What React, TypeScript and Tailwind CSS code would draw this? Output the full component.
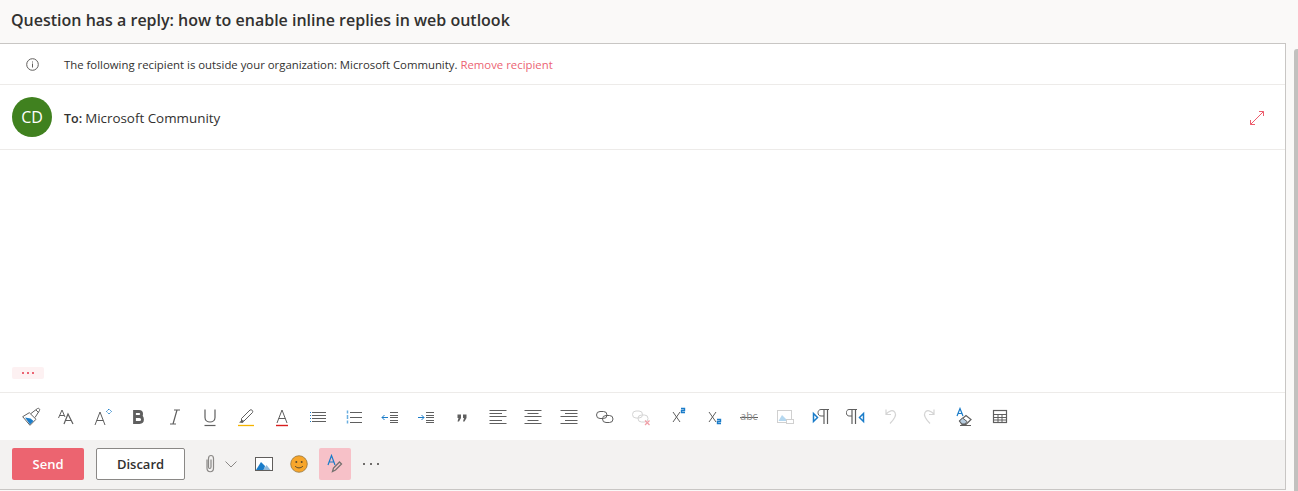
import React from "react";

const G = "#5f5f5f";
const B = "#1a7cc9";
const Ic = ({ children, w = 20, h = 20 }: { children: React.ReactNode; w?: number; h?: number }) => (
  <svg width={w} height={h} viewBox={`0 0 ${w} ${h}`} fill="none" strokeWidth="1">{children}</svg>
);
const L = ({ x1, x2, y, c = G }: { x1: number; x2: number; y: number; c?: string }) => <path d={`M${x1} ${y + 0.5}H${x2}`} stroke={c} />;

const icons: React.ReactNode[] = [
  <Ic key="0">
    <path d="M1.700 9.700 8.300 5.700 15 12.300 9 18.300z" fill="#fff" stroke={G} />
    <path d="M4 10.500 9.500 11.500 12.500 14 9 17.500z" fill={B} />
    <path d="M10 6.500 16.500 1.500c1.200-.8 2.800.8 2 2L14 10.500" stroke={G} />
    <path d="M15 3 17.500 5.500" stroke={G} />
  </Ic>,
  <Ic key="1">
    <path d="M1.500 11 5 3l3 7M2.500 8.500H7" stroke={G} />
    <path d="M7 17 11 7l5 10M8.500 13.500h6" stroke={G} strokeWidth="1.200" />
  </Ic>,
  <Ic key="2">
    <path d="M2 18 7 5l5 13M3.700 13.500h6.600" stroke={G} />
    <path d="M13.500 4.500l2.500-2.500 2.500 2.500-2.500 2.500z" stroke={B} strokeDasharray="1.500 .7" />
  </Ic>,
  <Ic key="3">
    <path d="M5.500 4.500h4.500c3.500 0 3.500 5 0 5H5.500zM5.500 9.500h5c4 0 4 6 0 6h-5z" stroke={G} strokeWidth="2.800" />
  </Ic>,
  <Ic key="4">
    <path d="M8 17 12 3M5 17h6M9 3h6" stroke={G} strokeWidth="1.200" />
  </Ic>,
  <Ic key="5">
    <path d="M5 2.500v8c0 6 10 6 10 0v-8" stroke={G} strokeWidth="1.200" />
    <path d="M4.500 18.500h11" stroke={G} strokeWidth="1.200" />
  </Ic>,
  <Ic key="6">
    <path d="M5.500 11.500 14 3c1.500-1 3.500 1 2.500 2.500L8 14H5.500z" stroke={G} />
    <path d="M3 15.500 6 13l2 1.500-1.500 1.500z" fill={G} />
    <path d="M2 18.500h16" stroke="#f5b400" strokeWidth="1.300" />
  </Ic>,
  <Ic key="7">
    <path d="M5 16 10 3l5 13M6.500 11.500h7" stroke={G} />
    <path d="M4 18.500h12" stroke="#d81e1e" strokeWidth="1.400" />
  </Ic>,
  <Ic key="8">
    <path d="M2 5.500h1M2 8.500h1M2 11.500h1M2 14.500h1" stroke={B} />
    <L x1={4} x2={18} y={5} /><L x1={4} x2={18} y={8} /><L x1={4} x2={18} y={11} /><L x1={4} x2={18} y={14} />
  </Ic>,
  <Ic key="9">
    <path d="M3.500 3.500v3M3.500 8v4M3.500 13.500v3" stroke="#6aaee0" strokeWidth="1.500" />
    <L x1={6} x2={18} y={5} /><L x1={6} x2={18} y={10} /><L x1={6} x2={18} y={15} />
  </Ic>,
  <Ic key="10">
    <path d="M8 10.500H2M4.500 8l-2.500 2.500L4.500 13" stroke={B} />
    <L x1={10} x2={18} y={5} /><L x1={10} x2={18} y={8} /><L x1={10} x2={18} y={10} /><L x1={10} x2={18} y={13} /><L x1={10} x2={18} y={15} />
  </Ic>,
  <Ic key="11">
    <path d="M2 10.500h6M5.500 8 8 10.500 5.500 13" stroke={B} />
    <L x1={10} x2={18} y={5} /><L x1={10} x2={18} y={8} /><L x1={10} x2={18} y={10} /><L x1={10} x2={18} y={13} /><L x1={10} x2={18} y={15} />
  </Ic>,
  <Ic key="12">
    <path d="M5.500 7.500h3.500v3.500l-2 3.500H5.500l1-3.500h-1zM11 7.500h3.500v3.500l-2 3.500H11l1-3.500h-1z" fill={G} />
  </Ic>,
  <Ic key="13" w={18} h={20}>
    {[3, 6, 9, 13, 16].map((y, i) => <L key={y} x1={0.5} x2={i % 2 ? 13 : 17.500} y={y} />)}
  </Ic>,
  <Ic key="14" w={18} h={20}>
    {[3, 6, 9, 13, 16].map((y, i) => <L key={y} x1={i % 2 ? 3.500 : 0.500} x2={i % 2 ? 14.500 : 17.500} y={y} />)}
  </Ic>,
  <Ic key="15" w={18} h={20}>
    {[3, 6, 9, 13, 16].map((y, i) => <L key={y} x1={i % 2 ? 5 : 0.500} x2={17.500} y={y} />)}
  </Ic>,
  <Ic key="16">
    <rect x="1.500" y="4.500" width="10.500" height="7" rx="3.500" stroke={G} />
    <rect x="7.500" y="8.500" width="10.500" height="7" rx="3.500" stroke={G} />
  </Ic>,
  <Ic key="17">
    <rect x="1.500" y="4" width="10" height="7" rx="3.500" stroke="#d4d4d4" />
    <rect x="7" y="8" width="10" height="7" rx="3.500" stroke="#d4d4d4" />
    <path d="M14 13.500 18.500 18M18.500 13.500 14 18" stroke="#f0a0a8" strokeWidth="1.300" />
  </Ic>,
  <Ic key="18">
    <path d="M6 5l7 10M13 5 6 15" stroke={G} />
    <path d="M14 1.500h3.500v2h-3v2H18" stroke={B} strokeWidth="1.400" />
  </Ic>,
  <Ic key="19">
    <path d="M6 5l7 10M13 5 6 15" stroke={G} />
    <path d="M14 12.500h3.500v2h-3v2H18" stroke={B} strokeWidth="1.400" />
  </Ic>,
  <Ic key="20">
    <path d="M1 10.500h18" stroke={G} />
    <text x="10" y="13" textAnchor="middle" fontSize="10.500" fill="#8a8a8a" fontFamily="Open Sans">abc</text>
  </Ic>,
  <Ic key="21">
    <rect x="2.500" y="3.500" width="14" height="12" stroke="#d0d0d0" />
    <path d="M3.500 14 7 8l6 6z" fill="#b5d8f0" />
    <rect x="11.500" y="12.500" width="7" height="4" fill="#fff" stroke="#d0d0d0" />
  </Ic>,
  <Ic key="22">
    <path d="M2.500 6.500 6.500 10.500l-4 4z" stroke={B} strokeWidth="1.500" />
    <path d="M18 2.500h-8c-4 0-4 6.500 0 6.500h3" stroke={G} />
    <path d="M13 2.500V17M16.500 2.500V17" stroke={G} strokeWidth="1.200" />
  </Ic>,
  <Ic key="23">
    <path d="M17.500 6.500 13.500 10.500l4 4z" stroke={B} strokeWidth="1.500" />
    <path d="M11 2.500H3c-3.500 0-3.500 6.500 0 6.500h3" stroke={G} />
    <path d="M6 2.500V17M9.500 2.500V17" stroke={G} strokeWidth="1.200" />
  </Ic>,
  <Ic key="24">
    <path d="M4 2.500v5h5M4 7c3-3 7-5 9-1.500 2 3.500-1 7-5 11" stroke="#d4d4d4" strokeWidth="1.200" />
  </Ic>,
  <Ic key="25">
    <path d="M16 2.500v5h-5M16 7c-3-3-7-5-9-1.500-2 3.500 1 7 5 11" stroke="#d4d4d4" strokeWidth="1.200" />
  </Ic>,
  <Ic key="26">
    <path d="M3 9 6 1.500 9 9M4 6.500h4" stroke={B} strokeWidth="1.200" />
    <path d="M5.500 14 12 8.500l5 4-5 5H8z" fill="#fff" stroke={G} strokeWidth="1.200" />
    <path d="M5.500 14l3-3 4.500 3.500-2 2.500H8z" fill="#b7cde0" stroke={G} />
    <path d="M6 18.500h11" stroke={G} />
  </Ic>,
  <Ic key="27">
    <rect x="3.500" y="3.500" width="13" height="12" stroke={G} strokeWidth="1.200" />
    <path d="M3.500 7.500h13M3.500 10.500h13M3.500 13h13M8 7.500V15.500M12 7.500V15.500" stroke={G} />
  </Ic>,
];

export default function App() {
  return (
    <div className="relative h-[491px] w-[1298px] overflow-hidden bg-[#faf9f8] [font-family:'Open_Sans','Noto_Sans',sans-serif]">
      <div className="flex h-[43px] items-center pb-[3px] pl-[11px] text-[16px] font-semibold text-[#323130]">
        Question has a reply: how to enable inline replies in web outlook
      </div>
      <div className="flex h-[447px] w-[1286px] flex-col border-t border-r border-b border-[#c8c6c4] bg-white">
        <div className="flex h-[41px] shrink-0 items-center border-b border-[#edebe9] pt-[1px] text-[11.370px] text-[#323130]">
          <span className="flex w-[64px] shrink-0 justify-center">
            <svg width="13" height="13" viewBox="0 0 13 13" fill="none">
              <circle cx="6.500" cy="6.500" r="5.800" stroke="#605e5c" />
              <path d="M6.500 5.500v4M6.500 3.500v1" stroke="#605e5c" />
            </svg>
          </span>
          <span>The following recipient is outside your organization: Microsoft Community.</span>
          <span className="ml-[3px] text-[#ec6473]">Remove recipient</span>
        </div>
        <div className="flex h-[65px] shrink-0 items-center border-b border-[#edebe9] pr-[20px] pl-[12px]">
          <div className="flex h-[40px] w-[40px] items-center justify-center rounded-full bg-[#40811f] text-[16px] text-white">CD</div>
          <div className="ml-[12px] flex items-baseline gap-[3px] pt-[3px] text-[13.400px] text-[#323130]">
            <span className="text-[12.500px] font-semibold">To:</span>
            <span>Microsoft Community</span>
          </div>
          <svg className="mt-[2px] ml-auto" width="16" height="16" viewBox="0 0 16 16" fill="none" stroke="#ec5c6c">
            <path d="M1.500 14.500 14.500 1.500M10 1.500h4.500V6M1.500 10v4.500H6" />
          </svg>
        </div>
        <div className="flex h-[243px] shrink-0 items-end border-b border-[#edebe9] pb-[13px] pl-[12px]">
          <div className="flex h-[12px] w-[32px] items-center justify-center gap-[3px] rounded-[2px] bg-[#fdf1f2]">
            <span className="h-[2px] w-[2px] bg-[#ec6473]" />
            <span className="h-[2px] w-[2px] bg-[#ec6473]" />
            <span className="h-[2px] w-[2px] bg-[#ec6473]" />
          </div>
        </div>
        <div className="flex h-[47px] shrink-0 items-center pt-[1px] pl-[13px]">
          {icons.map((icon, i) => (
            <span key={i} className="flex h-[36px] w-[35.900px] shrink-0 items-center justify-center">{icon}</span>
          ))}
        </div>
        <div className="flex h-[49px] shrink-0 items-center bg-[#f3f2f1] pb-[1px] pl-[12px]">
          <button className="h-[32px] w-[72px] rounded-[2px] bg-[#ec6470] pt-[1px] text-[13px] font-semibold text-white">Send</button>
          <button className="ml-[12px] h-[32px] w-[89px] rounded-[2px] border border-[#8a8886] bg-white pt-[1px] text-[13px] font-semibold text-[#323130]">Discard</button>
          <span className="ml-[17px] flex w-[16px] justify-center">
            <svg width="12" height="20" viewBox="0 0 12 20" fill="none" stroke="#8a8886" strokeWidth="1.200">
              <path d="M3 5.500V14c0 5 6.500 5 6.500 0V4.500c0-4-5-4-5 0V13c0 2 2.500 2 2.500 0V5.500" />
            </svg>
          </span>
          <span className="ml-[6px] flex w-[14px] justify-center">
            <svg width="12" height="7" viewBox="0 0 12 7" fill="none" stroke="#8a8886"><path d="M.5.500 6 6 11.500.500" /></svg>
          </span>
          <span className="ml-[17px] flex w-[18px] justify-center">
            <svg width="18" height="14" viewBox="0 0 18 14" fill="none">
              <rect x=".500" y=".500" width="17" height="13" fill="#fff" stroke="#605e5c" />
              <path d="M1 13 6 5l4 4-1 4z" fill={B} />
              <path d="M8 13l3.500-5 4 5z" fill="#8fb9dc" />
            </svg>
          </span>
          <span className="ml-[17px] flex">
            <svg width="18" height="18" viewBox="0 0 18 18" fill="none">
              <circle cx="9" cy="9" r="8.300" fill="#f7a62b" stroke="#8a6a30" strokeWidth=".700" />
              <circle cx="6.300" cy="7" r="1" fill="#5c4a2a" />
              <circle cx="11.700" cy="7" r="1" fill="#5c4a2a" />
              <path d="M5 11c2 2.500 6 2.500 8 0" stroke="#5c4a2a" />
            </svg>
          </span>
          <span className="ml-[11px] flex h-[32px] w-[32px] items-center justify-center rounded-[2px] bg-[#f7c1c8]">
            <svg width="16" height="20" viewBox="0 0 16 20" fill="none">
              <path d="M1 11 4.500 1.500 8 11M2 8h5" stroke={B} strokeWidth="1.200" />
              <path d="M5.500 17.500 6.500 14 12.500 8l2 2-6 6z" stroke="#75716f" strokeWidth="1.300" />
            </svg>
          </span>
          <span className="ml-[12px] flex w-[16px] justify-between">
            <span className="h-[2px] w-[2px] bg-[#6f6d6b]" />
            <span className="h-[2px] w-[2px] bg-[#6f6d6b]" />
            <span className="h-[2px] w-[2px] bg-[#6f6d6b]" />
          </span>
        </div>
      </div>
      <div className="absolute top-[49px] right-0 h-[442px] w-[4px] rounded-tl-[3px] bg-[#c2c1bf]" />
    </div>
  );
}
